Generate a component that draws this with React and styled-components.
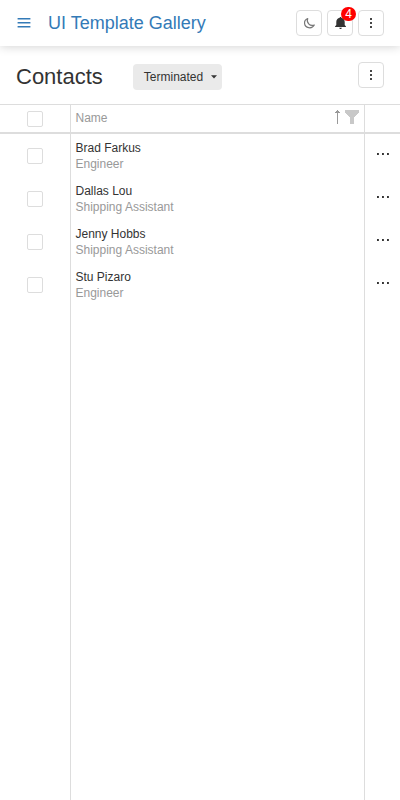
import React from "react";
import styled, { createGlobalStyle } from "styled-components";

const GlobalStyle = createGlobalStyle`
  * { box-sizing: border-box; }
  body {
    margin: 0;
    background: #fff;
    color: #333;
    font: 12px/16px "Liberation Sans", Arial, sans-serif;
  }
  button { font: inherit; color: inherit; }
`;

const Page = styled.div`
  display: flex;
  flex-direction: column;
  height: 100vh;
  overflow: hidden;
`;

const TopBar = styled.header`
  display: flex;
  align-items: center;
  flex: none;
  height: 46px;
  padding: 0 16px;
  background: #fff;
  box-shadow: 0 0 10px rgba(0, 0, 0, 0.2);
`;

const MenuButton = styled.button`
  display: flex;
  width: 16px;
  height: 16px;
  padding: 0;
  border: 0;
  background: none;
  color: #337ab7;
`;

const AppTitle = styled.div`
  margin-left: 16px;
  font-size: 18px;
  line-height: 24px;
  color: #337ab7;
  white-space: nowrap;
`;

const Actions = styled.div`
  display: flex;
  gap: 5px;
  margin-left: auto;
`;

const IconButton = styled.button`
  position: relative;
  display: flex;
  width: 26px;
  height: 26px;
  padding: 0;
  border: 1px solid #ddd;
  border-radius: 4px;
  background: #fff;
  color: #333;
`;

const Badge = styled.span`
  position: absolute;
  top: -4px;
  right: -4px;
  width: 15px;
  height: 14px;
  border-radius: 7px;
  background: #f00;
  color: #fff;
  font-size: 12px;
  line-height: 14px;
  text-align: center;
`;

const PageHeader = styled.div`
  display: flex;
  align-items: flex-start;
  flex: none;
  height: 58px;
  padding: 16px 16px 0;
`;

const PageTitle = styled.h1`
  margin: 0;
  font-size: 22px;
  font-weight: 400;
  line-height: 30px;
`;

const FilterButton = styled.button`
  display: flex;
  align-items: center;
  justify-content: space-between;
  width: 89px;
  height: 26px;
  margin: 2px 0 0 30px;
  padding: 0 5px 0 11px;
  border: 0;
  border-radius: 4px;
  background: #eaeaea;
`;

const Table = styled.div`
  display: flex;
  flex-direction: column;
  flex: 1;
  border-top: 1px solid #ddd;
`;

const Row = styled.div`
  display: grid;
  grid-template-columns: 71px 1fr 35px;
  flex: ${(p) => (p.$fill ? "1" : "none")};
  height: ${(p) => (p.$head ? "29px" : p.$fill ? "auto" : "43px")};
  border-bottom: ${(p) => (p.$head ? "2px solid #ddd" : "0")};
`;

const SelectCell = styled.div`
  display: flex;
  align-items: center;
  justify-content: center;
  border-right: 1px solid #ddd;
`;

const NameCell = styled.div`
  display: flex;
  flex-direction: column;
  justify-content: center;
  padding: 0 4.5px;
  border-right: 1px solid #ddd;
`;

const HeaderCell = styled.div`
  display: flex;
  justify-content: space-between;
  padding: 5px 5px 0 4.5px;
  border-right: 1px solid #ddd;
  color: #999;
`;

const MenuCell = styled.div`
  display: flex;
  align-items: flex-start;
  padding: 18px 0 0 12px;
`;

const Checkbox = styled.input.attrs({ type: "checkbox" })`
  appearance: none;
  width: 16px;
  height: 16px;
  margin: 0;
  border: 1px solid #ddd;
  border-radius: 2px;
  background: #fff;
`;

const Role = styled.span`
  color: #999;
`;

const HeaderIcons = styled.span`
  display: flex;
`;

const VerticalDots = () => (
  <svg width="24" height="24" fill="currentColor">
    <path d="M11.1 7.1h1.8v1.8h-1.8zM11.1 11.1h1.8v1.8h-1.8zM11.1 15.1h1.8v1.8h-1.8z" />
  </svg>
);

const contacts = [
  ["Brad Farkus", "Engineer"],
  ["Dallas Lou", "Shipping Assistant"],
  ["Jenny Hobbs", "Shipping Assistant"],
  ["Stu Pizaro", "Engineer"],
];

export default function App() {
  return (
    <Page>
      <GlobalStyle />
      <TopBar>
        <MenuButton aria-label="Menu">
          <svg width="16" height="16" fill="currentColor">
            <path d="M1.6 3h12.8v1.6H1.6zM1.6 7h12.8v1.6H1.6zM1.6 11h12.8v1.6H1.6z" />
          </svg>
        </MenuButton>
        <AppTitle>UI Template Gallery</AppTitle>
        <Actions>
          <IconButton aria-label="Dark mode">
            <svg width="24" height="24" viewBox="-0.3 0 24 24" fill="none" stroke="#777" strokeWidth="1.2" strokeLinejoin="round">
              <path d="M10.4 7.5C8.1 8.3 7 10.3 7.3 12.6c.5 4.3 7.1 6.1 9.7 1.4-2 .8-4.2.4-5.6-1.2-1.4-1.6-1.8-3.6-1-5.3Z" />
            </svg>
          </IconButton>
          <IconButton aria-label="Notifications">
            <svg width="24" height="24" viewBox="-0.5 0 24 24" fill="currentColor">
              <path d="M11.3 6.7V6h1.4v.7c2.3.5 3.5 2 3.5 4.2v3.2l1.3 1.3v.7h-11v-.7l1.3-1.3v-3.2c0-2.2 1.2-3.7 3.5-4.2ZM10.8 16.8h2.5c0 1.6-2.5 1.6-2.5 0Z" />
            </svg>
            <Badge>4</Badge>
          </IconButton>
          <IconButton aria-label="More"><VerticalDots /></IconButton>
        </Actions>
      </TopBar>
      <PageHeader>
        <PageTitle>Contacts</PageTitle>
        <FilterButton>
          Terminated
          <svg width="6" height="4" fill="currentColor"><path d="M0 .3h6L3 3.5Z" /></svg>
        </FilterButton>
        <Actions>
          <IconButton aria-label="More"><VerticalDots /></IconButton>
        </Actions>
      </PageHeader>
      <Table>
        <Row $head>
          <SelectCell><Checkbox /></SelectCell>
          <HeaderCell>
            Name
            <HeaderIcons>
              <svg width="25" height="15" shapeRendering="crispEdges">
                <path fill="#999" d="M3 0h1v14H3zM2 1h3v1H2zM1 2h5v1H1z" />
                <path fill="#c8c8c8" d="M11 0h14v3h-1v1h-1v1h-1v1h-1v1h-1v7h-4V7h-1V6h-1V5h-1V4h-1V3h-1z" />
              </svg>
            </HeaderIcons>
          </HeaderCell>
        </Row>
        {contacts.map(([name, role]) => (
          <Row key={name}>
            <SelectCell><Checkbox /></SelectCell>
            <NameCell>
              <span>{name}</span>
              <Role>{role}</Role>
            </NameCell>
            <MenuCell>
              <svg width="13" height="4" fill="currentColor">
                <path d="M0 1h1.9v1.9H0zM5 1h1.9v1.9H5zM10 1h1.9v1.9H10z" />
              </svg>
            </MenuCell>
          </Row>
        ))}
        <Row $fill>
          <SelectCell />
          <NameCell />
        </Row>
      </Table>
    </Page>
  );
}
